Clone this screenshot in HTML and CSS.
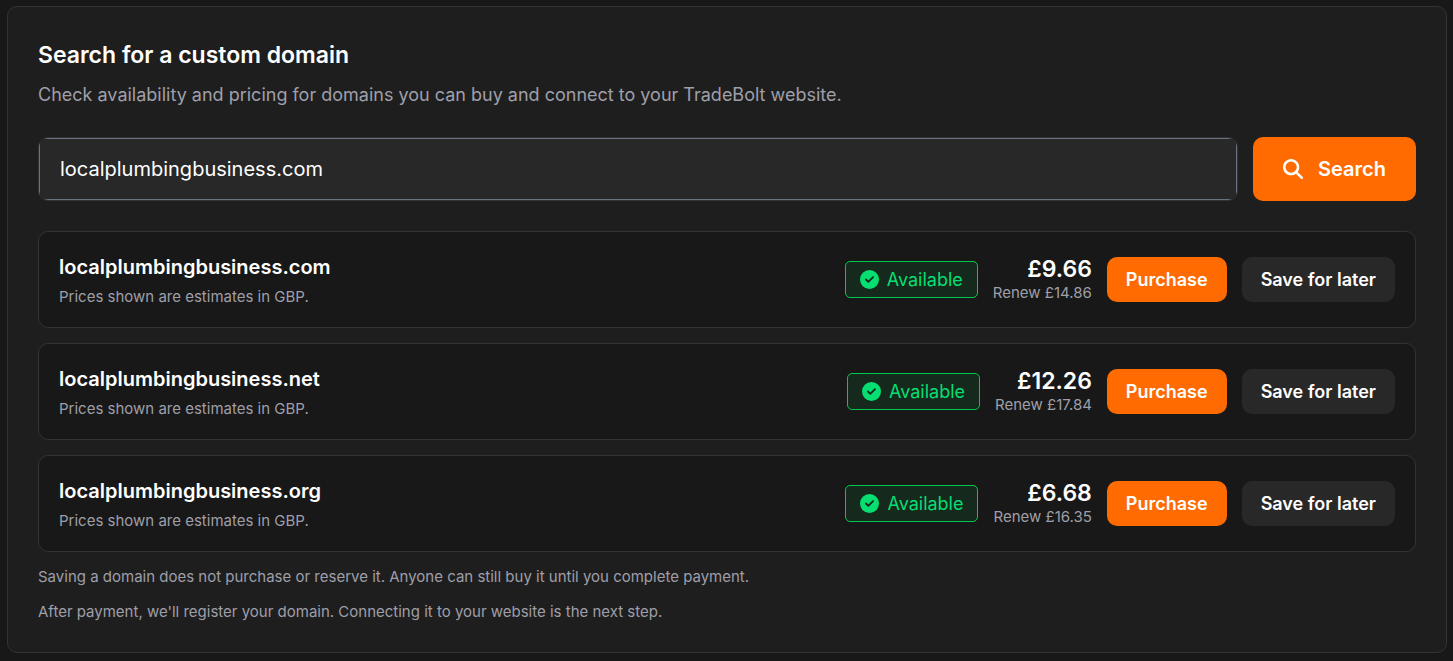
FILE: index.html
```html
<!DOCTYPE html>
<html lang="en">
<head>
	<meta charset="UTF-8">
	<meta name="viewport" content="width=device-width, initial-scale=1">
	<title>Search for a custom domain</title>
	<link rel="stylesheet" href="styles.css">
</head>
<body>
	<!-- shared icons -->
	<svg class="sprite" aria-hidden="true">
		<symbol id="icon-search" viewBox="0 0 512 512">
			<path d="M416 208c0 45.900-14.900 88.300-40 122.700L502.600 457.400c12.500 12.500 12.500 32.800 0 45.300s-32.800 12.500-45.300 0L330.700 376c-34.400 25.200-76.800 40-122.700 40C93.100 416 0 322.900 0 208S93.100 0 208 0S416 93.100 416 208zM208 352a144 144 0 1 0 0-288 144 144 0 1 0 0 288z"/>
		</symbol>
		<symbol id="icon-check" viewBox="0 0 512 512">
			<path d="M256 512A256 256 0 1 0 256 0a256 256 0 1 0 0 512zM369 209L241 337c-9.400 9.400-24.600 9.400-33.900 0l-64-64c-9.400-9.400-9.400-24.600 0-33.900s24.600-9.400 33.900 0l47 47L335 175c9.400-9.400 24.600-9.400 33.900 0s9.400 24.600 0 33.900z"/>
		</symbol>
	</svg>

	<main class="panel">
		<h1 class="title">Search for a custom domain</h1>
		<p class="intro">Check availability and pricing for domains you can buy and connect to your TradeBolt website.</p>

		<form class="search">
			<div class="search-box">
				<input class="search-input" type="text" name="domain" aria-label="Domain name" value="localplumbingbusiness.com">
			</div>
			<button class="btn btn-search" type="submit">
				<svg class="icon-search" aria-hidden="true"><use href="#icon-search"/></svg>
				Search
			</button>
		</form>

		<ul class="results">
			<li class="result">
				<div class="info">
					<h2 class="domain">localplumbingbusiness.com</h2>
					<p class="small">Prices shown are estimates in GBP.</p>
				</div>
				<div class="actions">
					<span class="badge"><svg class="icon-check" aria-hidden="true"><use href="#icon-check"/></svg>Available</span>
					<div class="cost">
						<p class="price">£9.66</p>
						<p class="renew">Renew £14.86</p>
					</div>
					<button class="btn btn-buy" type="button">Purchase</button>
					<button class="btn btn-save" type="button">Save for later</button>
				</div>
			</li>
			<li class="result">
				<div class="info">
					<h2 class="domain">localplumbingbusiness.net</h2>
					<p class="small">Prices shown are estimates in GBP.</p>
				</div>
				<div class="actions">
					<span class="badge"><svg class="icon-check" aria-hidden="true"><use href="#icon-check"/></svg>Available</span>
					<div class="cost">
						<p class="price">£12.26</p>
						<p class="renew">Renew £17.84</p>
					</div>
					<button class="btn btn-buy" type="button">Purchase</button>
					<button class="btn btn-save" type="button">Save for later</button>
				</div>
			</li>
			<li class="result">
				<div class="info">
					<h2 class="domain">localplumbingbusiness.org</h2>
					<p class="small">Prices shown are estimates in GBP.</p>
				</div>
				<div class="actions">
					<span class="badge"><svg class="icon-check" aria-hidden="true"><use href="#icon-check"/></svg>Available</span>
					<div class="cost">
						<p class="price">£6.68</p>
						<p class="renew">Renew £16.35</p>
					</div>
					<button class="btn btn-buy" type="button">Purchase</button>
					<button class="btn btn-save" type="button">Save for later</button>
				</div>
			</li>
		</ul>

		<div class="notes">
			<p class="small">Saving a domain does not purchase or reserve it. Anyone can still buy it until you complete payment.</p>
			<p class="small">After payment, we'll register your domain. Connecting it to your website is the next step.</p>
		</div>
	</main>
</body>
</html>
```

FILE: styles.css
```css
*{
	box-sizing: border-box;
}
body{
	margin: 0;
	padding: 6px 6px 8px 7px;
	background: #181818;
	color: #fff;
	font-family: Inter, "Liberation Sans", sans-serif;
}
h1, h2, p, ul{
	margin: 0;
	padding: 0;
}
.sprite{
	display: none;
}
.panel{
	padding: 30px;
	border: 1px solid #333;
	border-radius: 10px;
	background: #1e1e1e;
}
.title{
	font-size: 23px;
	font-weight: 600;
	line-height: 37px;
}
.intro{
	margin-top: 8px;
	color: #9f9fa9;
	font-size: 18px;
	line-height: 25px;
}

/* search form */
.search{
	display: flex;
	gap: 15px;
	margin-top: 30px;
}
.search-box{
	flex: 1;
	min-width: 0;
	border: 1px solid #333;
	border-radius: 10px;
	overflow: hidden;
}
.search-input{
	display: block;
	width: 100%;
	height: 62px;
	padding: 0 20px;
	border: 1px solid #6a7282;
	border-radius: 0;
	background: #282828;
	color: #fff;
	font: 400 20px Inter, "Liberation Sans", sans-serif;
	outline: none;
}
.btn{
	flex: none;
	border: 0;
	border-radius: 10px;
	padding: 10px 19px;
	color: #fff;
	font-family: inherit;
	font-size: 18px;
	font-weight: 600;
	line-height: 25px;
	white-space: nowrap;
	cursor: pointer;
}
.btn-search{
	display: flex;
	align-items: center;
	gap: 15px;
	padding: 0 30px;
	background: #ff6b00;
	font-size: 20px;
}
.btn-buy{
	background: #ff6b00;
}
.btn-save{
	background: #282828;
}
.icon-search{
	width: 20px;
	height: 20px;
	fill: currentColor;
}
.icon-check{
	width: 19px;
	height: 19px;
	fill: currentColor;
}

/* results */
.results{
	display: grid;
	gap: 15px;
	margin-top: 30px;
	list-style: none;
}
.result{
	display: flex;
	flex-wrap: wrap;
	align-items: center;
	justify-content: space-between;
	gap: 15px;
	padding: 20px;
	border: 1px solid #333;
	border-radius: 10px;
	background: #181818;
}
.domain{
	font-size: 20px;
	font-weight: 600;
	line-height: 30px;
}
.small{
	color: #9f9fa9;
	font-size: 15px;
	line-height: 20px;
}
.info .small{
	margin-top: 5px;
}
.actions{
	display: flex;
	flex-wrap: wrap;
	align-items: center;
	gap: 15px;
}
.badge{
	display: flex;
	align-items: center;
	gap: 8px;
	padding: 5px 14px;
	border: 1px solid #00c950;
	border-radius: 5px;
	background: rgba(0, 201, 80, .1);
	color: #05df72;
	font-size: 18px;
	line-height: 25px;
}
.cost{
	text-align: right;
}
.price{
	font-size: 23px;
	font-weight: 600;
	line-height: 27px;
}
.renew{
	color: #9f9fa9;
	font-size: 15px;
	line-height: 20px;
}
.notes{
	display: grid;
	gap: 15px;
	margin-top: 15px;
}
```
